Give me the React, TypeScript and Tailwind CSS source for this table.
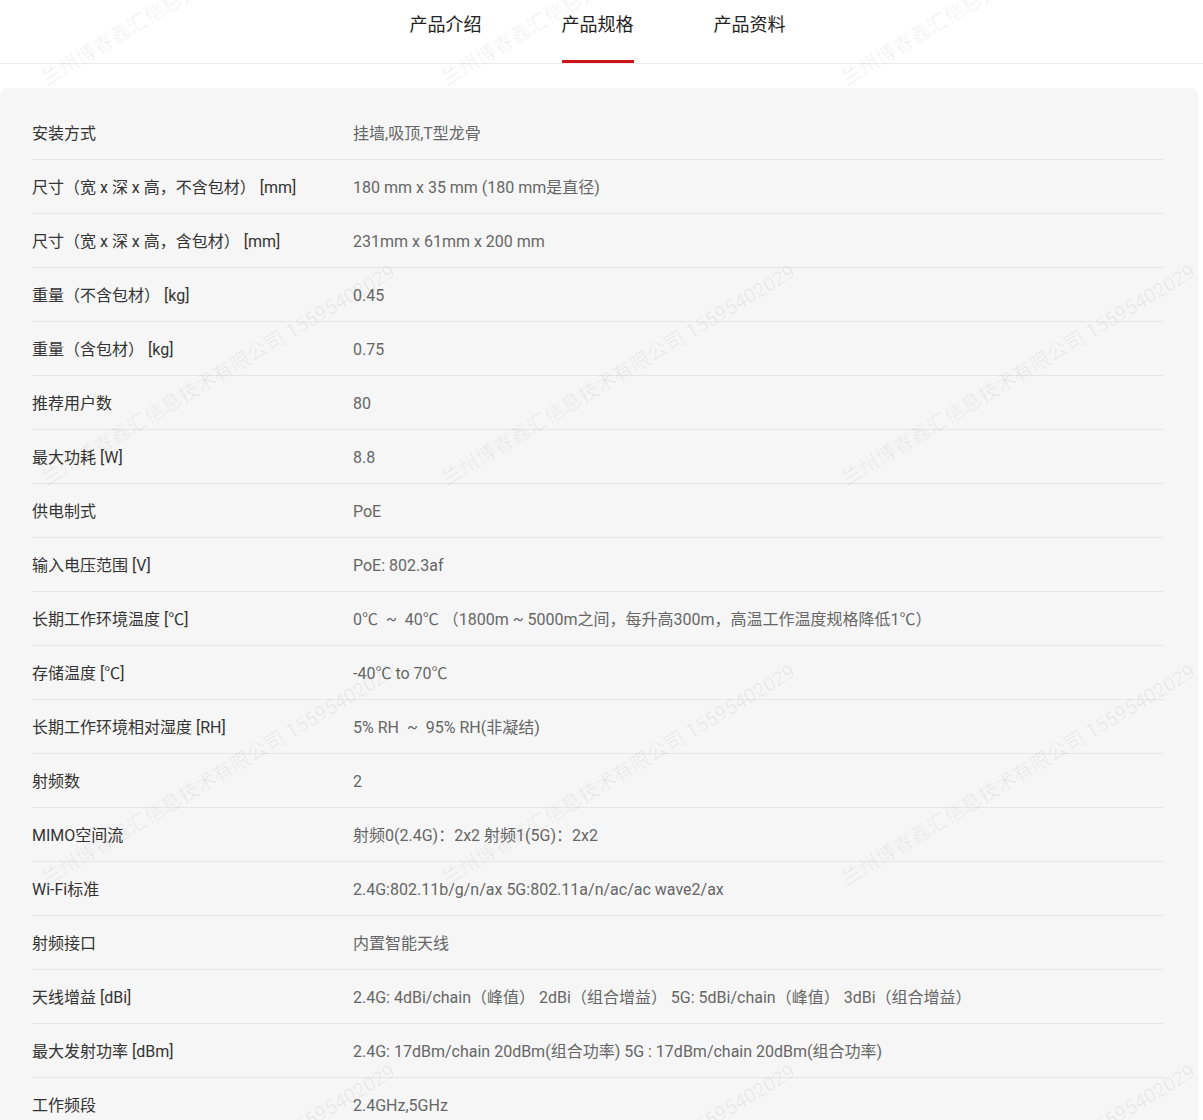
import React from "react";

const specs: [string, string][] = [
  ["安装方式", "挂墙,吸顶,T型龙骨"],
  ["尺寸（宽 x 深 x 高，不含包材） [mm]", "180 mm x 35 mm (180 mm是直径)"],
  ["尺寸（宽 x 深 x 高，含包材） [mm]", "231mm x 61mm x 200 mm"],
  ["重量（不含包材） [kg]", "0.45"],
  ["重量（含包材） [kg]", "0.75"],
  ["推荐用户数", "80"],
  ["最大功耗 [W]", "8.8"],
  ["供电制式", "PoE"],
  ["输入电压范围 [V]", "PoE: 802.3af"],
  ["长期工作环境温度 [℃]", "0℃\u00a0 ~\u00a0 40℃ （1800m ~ 5000m之间，每升高300m，高温工作温度规格降低1℃）"],
  ["存储温度 [℃]", "-40℃ to 70℃"],
  ["长期工作环境相对湿度 [RH]", "5% RH\u00a0 ~\u00a0 95% RH(非凝结)"],
  ["射频数", "2"],
  ["MIMO空间流", "射频0(2.4G)：2x2 射频1(5G)：2x2"],
  ["Wi-Fi标准", "2.4G:802.11b/g/n/ax 5G:802.11a/n/ac/ac wave2/ax"],
  ["射频接口", "内置智能天线"],
  ["天线增益 [dBi]", "2.4G: 4dBi/chain（峰值） 2dBi（组合增益） 5G: 5dBi/chain（峰值） 3dBi（组合增益）"],
  ["最大发射功率 [dBm]", "2.4G: 17dBm/chain 20dBm(组合功率) 5G : 17dBm/chain 20dBm(组合功率)"],
  ["工作频段", "2.4GHz,5GHz"],
];

const tabs = ["产品介绍", "产品规格", "产品资料"];

// watermark start points, one per 400x400 tile
const marks: { x: number; y: number }[] = [];
for (let r = 0; r < 4; r++) {
  for (let c = 0; c < 3; c++) {
    marks.push({ x: 43 + c * 400, y: 80 + r * 400 });
  }
}

function Watermark() {
  return (
    <div className="pointer-events-none absolute inset-0 overflow-hidden">
      {marks.map((m, i) => (
        <span
          key={i}
          className="absolute whitespace-nowrap text-[20px] leading-none text-black/[0.06] origin-left -rotate-[31deg]"
          style={{ left: m.x, top: m.y - 10 }}
        >
          兰州博睿鑫汇信息技术有限公司 15595402029
        </span>
      ))}
    </div>
  );
}

export default function App() {
  return (
    <div className="relative h-[1120px] overflow-hidden bg-white font-['Roboto','Noto_Sans_CJK_SC',sans-serif]">
      <div className="flex h-[64px] justify-center gap-20 border-b border-[#ebebeb] pr-[8px]">
        {tabs.map((t, i) => (
          <div
            key={t}
            className={`flex h-[63px] items-center border-b-[3px] pb-[11px] text-[18px] text-[#222] ${
              i === 1 ? "border-[#d0121a]" : "border-transparent"
            }`}
          >
            {t}
          </div>
        ))}
      </div>

      <div className="mt-6 w-[1198px] rounded-lg bg-[#f6f6f6] pl-8 pr-[34px] pt-[18px]">
        {specs.map(([k, v]) => (
          <div
            key={k}
            className="flex h-[54px] items-center border-b border-[#e6e6e6] pt-[2px] text-[16px]"
          >
            <div className="w-[321px] shrink-0 whitespace-pre text-[#333]">{k}</div>
            <div className="whitespace-pre text-[#666]">{v}</div>
          </div>
        ))}
      </div>

      <Watermark />
    </div>
  );
}
